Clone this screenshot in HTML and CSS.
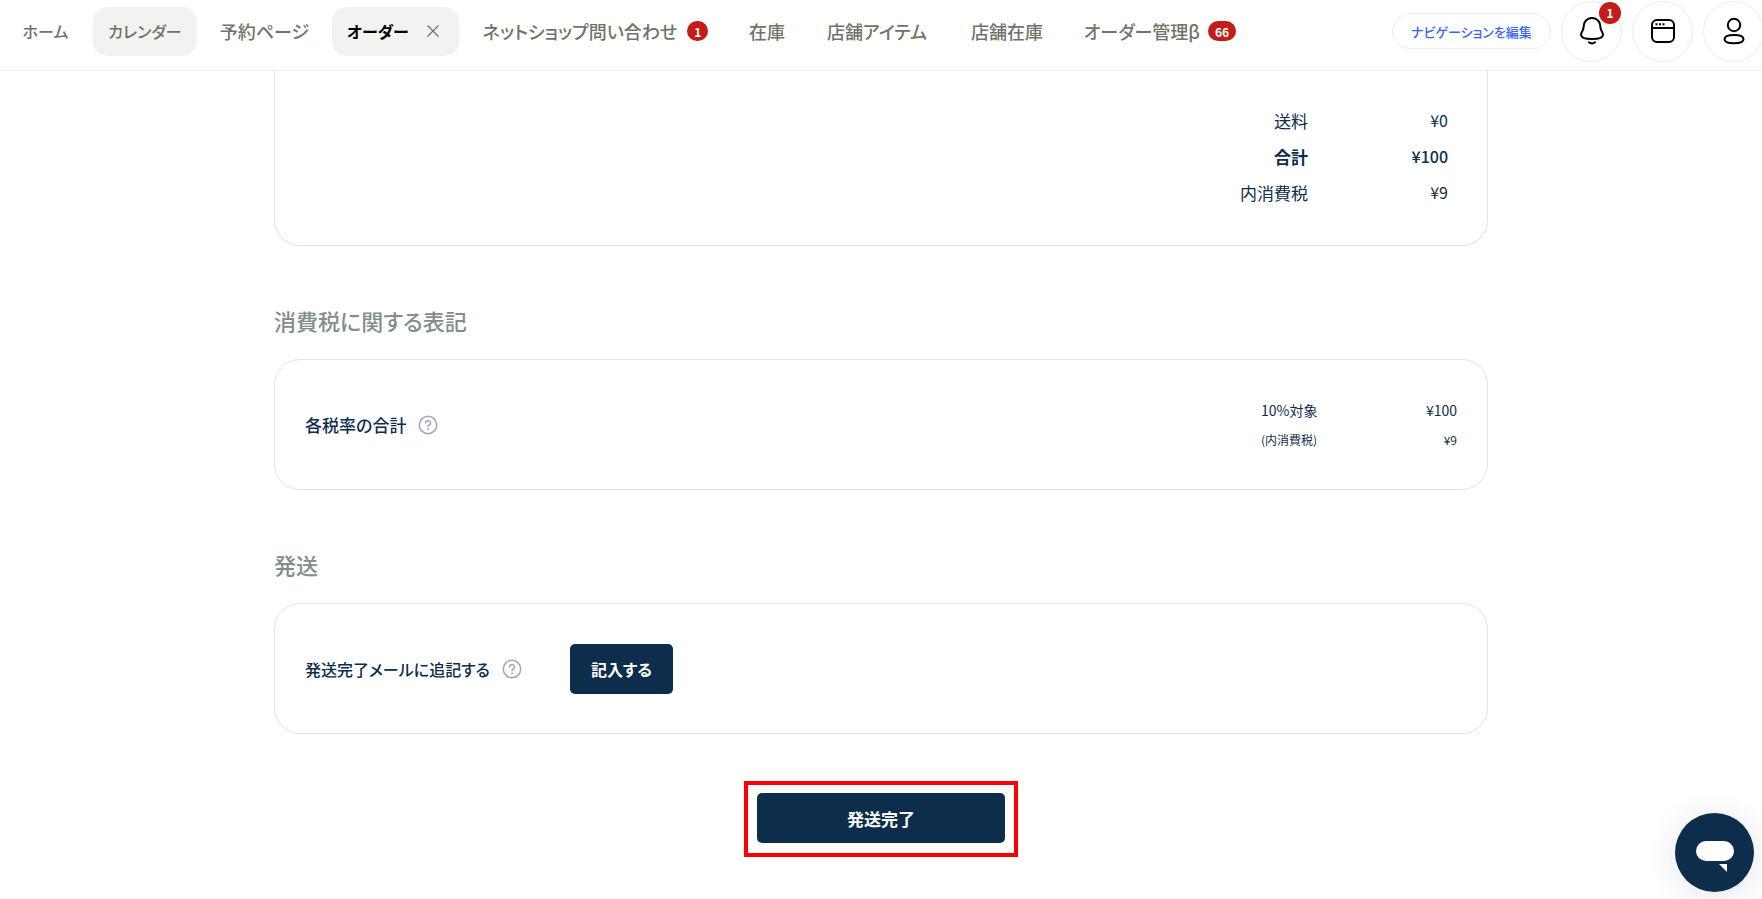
FILE: index.html
```
<!DOCTYPE html>
<html lang="ja">
<head>
<meta charset="utf-8">
<meta name="viewport" content="width=device-width, initial-scale=1">
<title>オーダー</title>
<link rel="stylesheet" href="styles.css">
</head>
<body>
<header class="topbar">
  <nav class="tabs">
    <a class="tab tab-s tab-kana" href="#">ホーム</a>
    <a class="tab tab-l tab-kana tab-shaded" href="#">カレンダー</a>
    <a class="tab tab-xl" href="#">予約ページ</a>
    <div class="tab tab-kana tab-current tab-shaded">
      <a class="tab-link" href="#" aria-current="page">オーダー</a>
      <button class="close" type="button" aria-label="閉じる">
        <svg width="12" height="12" viewBox="0 0 12 12" fill="none" stroke="currentColor" stroke-width="1.200"><path d="M.5.5l11 11M11.500.5l-11 11"/></svg>
      </button>
    </div>
    <a class="tab tab-shop" href="#">ネットショップ問い合わせ<span class="badge">1</span></a>
    <a class="tab tab-stock" href="#">在庫</a>
    <a class="tab tab-items" href="#">店舗アイテム</a>
    <a class="tab tab-store" href="#">店舗在庫</a>
    <a class="tab tab-manage" href="#">オーダー管理β<span class="badge">66</span></a>
  </nav>
  <div class="tools">
    <button class="edit-nav" type="button">ナビゲーションを編集</button>
    <button class="round" type="button" aria-label="通知">
      <svg width="26" height="30" viewBox="0 0 26 30" fill="none" stroke="#000" stroke-width="2" stroke-linecap="round"><path d="M13 2C8.700 2 5.200 4.800 4.900 9C4.700 12.200 4.500 13.400 3.300 15.200C2.500 16.500 2 17.300 2 18.700C2 22 6.500 23 13 23S24 22 24 18.700C24 17.300 23.500 16.500 22.700 15.200C21.500 13.400 21.300 12.200 21.100 9C20.800 4.800 17.300 2 13 2Z"/><path d="M10 26.200c1.700 1.600 4.300 1.600 6 0"/></svg>
      <span class="badge badge-corner">1</span>
    </button>
    <button class="round" type="button" aria-label="ウィンドウ">
      <svg width="26" height="26" viewBox="0 0 26 26" fill="none" stroke="#000" stroke-width="2"><rect x="2" y="2" width="22" height="22" rx="5"/><path d="M2 10h22"/><path d="M5.500 6.300h2M9 6.300h2M12.500 6.300h2"/></svg>
    </button>
    <button class="round" type="button" aria-label="アカウント">
      <svg width="24" height="28" viewBox="0 0 24 28" fill="none" stroke="#000" stroke-width="2"><circle cx="12" cy="8" r="6.200"/><path d="M12 18c5.500 0 9.500 1.600 9.500 4.300S17.500 26.300 12 26.300S2.500 25 2.500 22.300S6.500 18 12 18Z"/></svg>
    </button>
  </div>
</header>

<main class="page">
  <section class="card card-totals">
    <table class="totals">
      <tr><th scope="row">送料</th><td>¥0</td></tr>
      <tr class="grand"><th scope="row">合計</th><td>¥100</td></tr>
      <tr><th scope="row">内消費税</th><td>¥9</td></tr>
    </table>
  </section>

  <h2 class="heading">消費税に関する表記</h2>
  <section class="card card-row">
    <span class="label">各税率の合計</span>
    <button class="help" type="button" aria-label="各税率の合計について">
      <svg width="20" height="20" viewBox="0 0 20 20" fill="none" stroke="currentColor" stroke-width="1.500" stroke-linecap="round"><circle cx="10" cy="10" r="8.700"/><path d="M7.500 8a2.500 2.300 0 1 1 3.700 2c-.8.500-1.200.9-1.200 1.700"/><path d="M10 14.200v.1" stroke-width="1.800"/></svg>
    </button>
    <table class="taxes">
      <tr><th scope="row">10%対象</th><td>¥100</td></tr>
      <tr class="minor"><th scope="row">(内消費税)</th><td>¥9</td></tr>
    </table>
  </section>

  <h2 class="heading">発送</h2>
  <section class="card card-row">
    <span class="label label-mail">発送完了メールに追記する</span>
    <button class="help" type="button" aria-label="追記について">
      <svg width="20" height="20" viewBox="0 0 20 20" fill="none" stroke="currentColor" stroke-width="1.500" stroke-linecap="round"><circle cx="10" cy="10" r="8.700"/><path d="M7.500 8a2.500 2.300 0 1 1 3.700 2c-.8.500-1.200.9-1.200 1.700"/><path d="M10 14.200v.1" stroke-width="1.800"/></svg>
    </button>
    <button class="primary write" type="button">記入する</button>
  </section>

  <div class="highlight">
    <button class="primary ship" type="button">発送完了</button>
  </div>
</main>

<button class="chat" type="button" aria-label="チャット">
  <svg width="40" height="32" viewBox="0 0 40 32" fill="#fff"><rect x="1" y="0" width="38" height="20" rx="10"/><path d="M24 23h8v8z"/></svg>
</button>
</body>
</html>
```
FILE: styles.css
```
* {
  box-sizing: border-box;
}

body {
  margin: 0;
  overflow: hidden;
  background: #fff;
  color: #0c2d4b;
  font-family: "Noto Sans CJK JP", sans-serif;
  font-feature-settings: "palt";
}

button {
  padding: 0;
  border: 0;
  background: none;
  color: inherit;
  font: inherit;
  font-feature-settings: inherit;
  cursor: pointer;
}

a {
  color: inherit;
  text-decoration: none;
}

svg {
  display: block;
}

.topbar {
  display: flex;
  justify-content: space-between;
  height: 71px;
  padding: 0 0 8px 8px;
  border-bottom: 1px solid #f0f0f0;
  background: #fff;
}

.tabs,
.tools {
  display: flex;
  align-items: center;
  gap: 10px;
}

.tab {
  display: flex;
  align-items: center;
  justify-content: center;
  gap: 10px;
  height: 49px;
  border-radius: 15px;
  color: #737267;
  font-size: 18px;
  font-weight: 500;
  white-space: nowrap;
}

.tab-kana {
  font-size: 16px;
}

.tab-shaded {
  background: #f2f2f0;
}

.tab-s { width: 75px; }
.tab-l { width: 104px; }
.tab-xl { width: 115px; }
.tab-shop { width: 253px; }
.tab-stock { width: 70px; }
.tab-items { width: 130px; }
.tab-store { width: 110px; }
.tab-manage { width: 176px; gap: 8px; }

.tab-current {
  width: 127px;
  justify-content: space-between;
  padding: 0 20px 0 15px;
}

.tab-link {
  color: #000;
  font-weight: 700;
}

.close {
  color: #737267;
}

.badge {
  display: flex;
  align-items: center;
  justify-content: center;
  min-width: 20px;
  height: 20px;
  padding: 0 7px;
  border-radius: 11px;
  background: #c41c16;
  color: #fff;
  font-size: 12px;
  font-weight: 700;
}

.tools {
  margin-right: -2px;
}

.edit-nav {
  width: 159px;
  height: 36px;
  border: 1px solid #ececec;
  border-radius: 18px;
  color: #3a64f5;
  font-size: 13px;
  font-weight: 500;
  white-space: nowrap;
}

.round {
  position: relative;
  display: flex;
  align-items: center;
  justify-content: center;
  width: 61px;
  height: 61px;
  border: 1px solid #ececec;
  border-radius: 50%;
}

.badge-corner {
  position: absolute;
  top: 0;
  right: 0;
  width: 22px;
  height: 22px;
  padding: 0;
}

.page {
  width: min(1214px, 100% - 32px);
  margin: 0 auto;
}

.card {
  border: 1px solid #e1e1e8;
  border-radius: 26px;
}

.card-totals {
  display: flex;
  justify-content: flex-end;
  padding: 31px 39px 35px;
  border-top: 0;
  border-radius: 0 0 26px 26px;
}

table {
  border-collapse: collapse;
}

th,
td {
  padding: 0;
  font-weight: inherit;
  text-align: right;
}

.totals {
  font-size: 17px;
  font-weight: 400;
}

.totals tr {
  height: 36px;
}

.totals td {
  width: 140px;
  font-size: 16px;
}

.totals .grand {
  font-weight: 700;
}

.grand td {
  font-weight: 500;
}

.heading {
  margin: 59px 0 24px;
  color: #7f8f8b;
  font-size: 22px;
  font-weight: 500;
  line-height: 30px;
}

.card-row {
  display: flex;
  align-items: center;
  height: 131px;
  padding: 0 30px;
}

.label {
  font-size: 17px;
  font-weight: 500;
}

.label-mail {
  font-size: 16px;
}

.help {
  margin-left: 12px;
  color: #9ea6bb;
}

.taxes {
  width: 196px;
  margin-left: auto;
  font-size: 14px;
}

.taxes tr {
  height: 29px;
}

.taxes th {
  text-align: left;
}

.taxes .minor {
  font-size: 12px;
}

.primary {
  height: 50px;
  border-radius: 5px;
  background: #0c2d4b;
  color: #fff;
  font-size: 17px;
  font-weight: 700;
}

.write {
  width: 103px;
  margin-left: 48px;
  font-size: 16px;
}

.highlight {
  display: flex;
  width: 274px;
  margin: 47px auto 0;
  padding: 8px 9px 10px;
  border: 4px solid #f00;
}

.ship {
  flex: 1;
}

.chat {
  position: fixed;
  right: 8px;
  bottom: 7px;
  display: flex;
  align-items: center;
  justify-content: center;
  width: 79px;
  height: 79px;
  padding-top: 8px;
  border-radius: 50%;
  background: #0c2d4b;
  box-shadow: 0 4px 32px rgba(12, 45, 75, 0.12);
}
```
